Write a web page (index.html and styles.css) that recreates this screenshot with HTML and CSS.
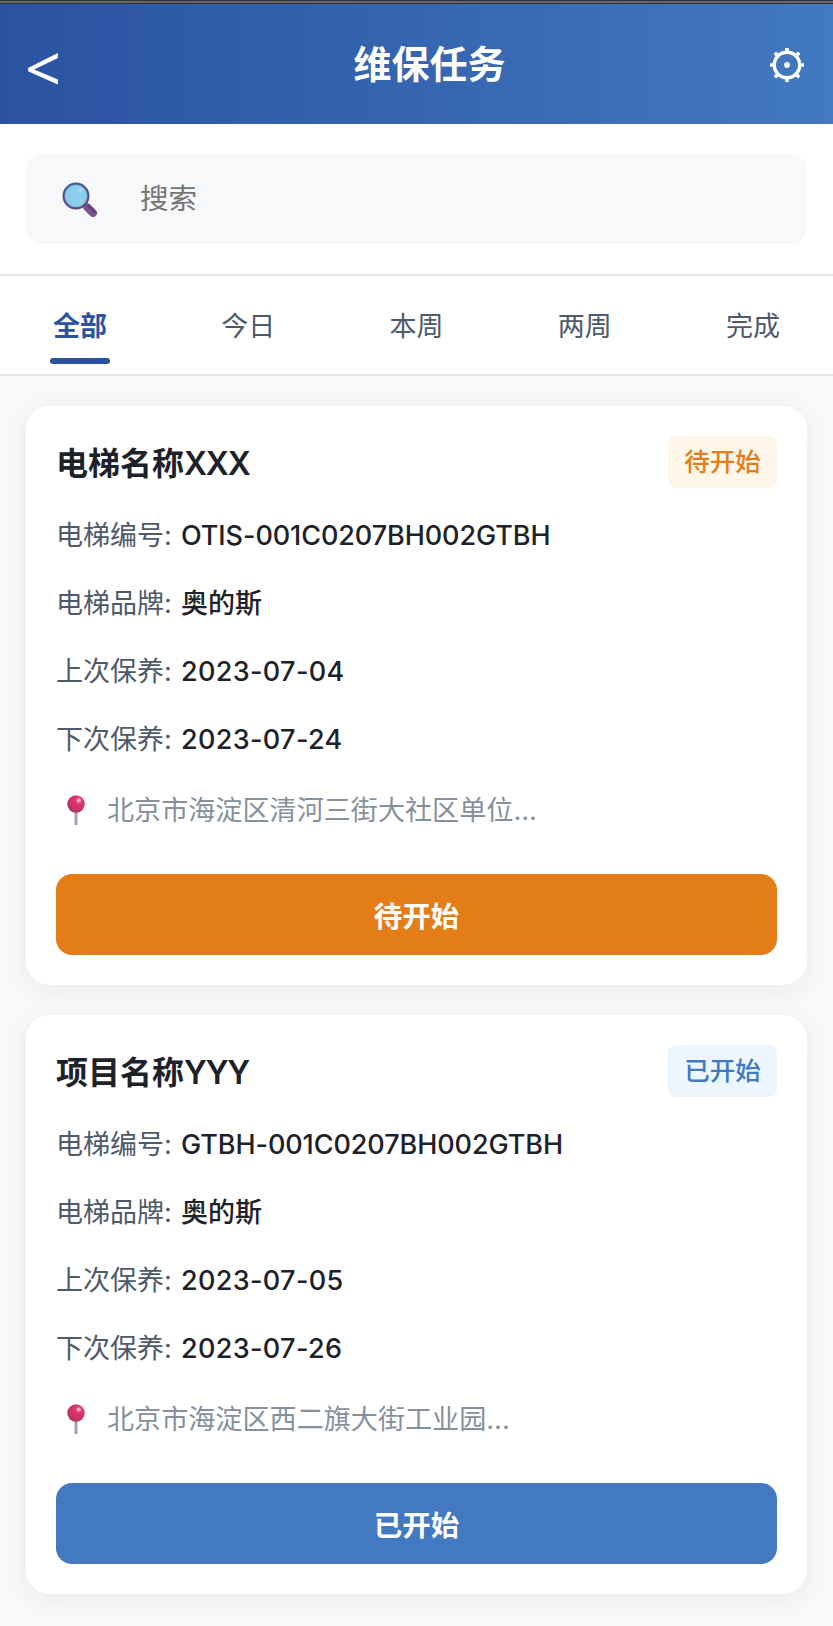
FILE: index.html
```html
<!DOCTYPE html>
<html lang="zh-CN">

<head>
    <meta charset="UTF-8">
    <meta name="viewport" content="width=device-width, initial-scale=1.0">
    <title>维保任务</title>
    <link rel="stylesheet" href="styles.css">
</head>

<body>
    <div class="topline"></div>
    <header class="header">
        <span class="back">&lt;</span>
        <h1>维保任务</h1>
        <svg class="gear" viewBox="-18 -18 36 36" width="36" height="36" fill="none" stroke="#fff">
            <circle r="12.7" stroke-width="3.4"/>
            <circle r="2.9" fill="#fff" stroke="none"/>
            <path stroke-width="3.6" d="M0-13V-17M0 13V17M-13 0H-17M13 0H17M-9.2-9.2L-12.2-12.2M9.2-9.2L12.2-12.2M-9.2 9.2L-12.2 12.2M9.2 9.2L12.2 12.2"/>
        </svg>
    </header>

    <div class="search">
        <div class="search-box">
            <svg class="search-icon" viewBox="0 0 36 36" width="36" height="36">
                <defs>
                    <linearGradient id="rim" x1="0" y1="0" x2="0" y2="1">
                        <stop offset="0" stop-color="#46578f"/>
                        <stop offset="1" stop-color="#69417d"/>
                    </linearGradient>
                </defs>
                <path d="M25.4 25.4L31 31" stroke="#7c528c" stroke-width="8" stroke-linecap="round"/>
                <path d="M26.5 24L32 29.5" stroke="#68417c" stroke-width="3" stroke-linecap="round"/>
                <circle cx="14" cy="14" r="12.4" fill="#8ccfeb" stroke="url(#rim)" stroke-width="2.2"/>
                <circle cx="14" cy="14" r="10.8" fill="none" stroke="#74b9e3" stroke-width="1"/>
                <circle cx="18.6" cy="8.2" r="2" fill="#bfd3f3"/>
            </svg>
            <input type="text" placeholder="搜索">
        </div>
    </div>

    <nav class="tabs">
        <a class="tab active">全部</a>
        <a class="tab">今日</a>
        <a class="tab">本周</a>
        <a class="tab">两周</a>
        <a class="tab">完成</a>
    </nav>

    <main class="list">
        <section class="card">
            <div class="card-head">
                <h2>电梯名称<span>XXX</span></h2>
                <span class="badge pending">待开始</span>
            </div>
            <div class="row"><span class="label">电梯编号:</span><span class="value code">OTIS-001C0207BH002GTBH</span></div>
            <div class="row"><span class="label">电梯品牌:</span><span class="value">奥的斯</span></div>
            <div class="row"><span class="label">上次保养:</span><span class="value date">2023-07-04</span></div>
            <div class="row"><span class="label">下次保养:</span><span class="value date">2023-07-24</span></div>
            <div class="address">
                <svg class="pin" viewBox="0 0 18 30" width="18" height="30">
                    <defs>
                        <radialGradient id="ball" cx="0.65" cy="0.3" r="0.75">
                            <stop offset="0" stop-color="#ee6b9b"/>
                            <stop offset="0.3" stop-color="#d93871"/>
                            <stop offset="0.7" stop-color="#cf2f68"/>
                            <stop offset="1" stop-color="#91405c"/>
                        </radialGradient>
                    </defs>
                    <rect x="7.5" y="16" width="3" height="14" fill="#a99bb4"/>
                    <circle cx="9" cy="9" r="8.7" fill="url(#ball)"/>
                    <circle cx="11.8" cy="5.4" r="2" fill="#f3a9c4"/>
                </svg>
                <span>北京市海淀区清河三街大社区单位...</span>
            </div>
            <button class="btn pending">待开始</button>
        </section>

        <section class="card">
            <div class="card-head">
                <h2>项目名称<span>YYY</span></h2>
                <span class="badge started">已开始</span>
            </div>
            <div class="row"><span class="label">电梯编号:</span><span class="value code">GTBH-001C0207BH002GTBH</span></div>
            <div class="row"><span class="label">电梯品牌:</span><span class="value">奥的斯</span></div>
            <div class="row"><span class="label">上次保养:</span><span class="value date">2023-07-05</span></div>
            <div class="row"><span class="label">下次保养:</span><span class="value date">2023-07-26</span></div>
            <div class="address">
                <svg class="pin" viewBox="0 0 18 30" width="18" height="30">
                    <rect x="7.5" y="16" width="3" height="14" fill="#a99bb4"/>
                    <circle cx="9" cy="9" r="8.7" fill="url(#ball)"/>
                    <circle cx="11.8" cy="5.4" r="2" fill="#f3a9c4"/>
                </svg>
                <span>北京市海淀区西二旗大街工业园...</span>
            </div>
            <button class="btn started">已开始</button>
        </section>
    </main>
</body>

</html>
```
FILE: styles.css
```css
* {
    box-sizing: border-box;
}

body {
    margin: 0;
    background: #f7f8fa;
    color: #1d2129;
    font-family: Inter, "Noto Sans CJK SC", sans-serif;
    font-size: 27px;
}

h1, h2 {
    margin: 0;
}

.topline {
    height: 4px;
    background: #666;
    border-top: 1px solid #333;
    border-bottom: 1px solid #333;
}

.header {
    display: flex;
    align-items: center;
    justify-content: space-between;
    height: 120px;
    padding: 0 28px 0 25px;
    background: linear-gradient(90deg, #2a52a0, #4279c0);
    color: #fff;
}

.header h1 {
    font-size: 38px;
    font-weight: 600;
    line-height: 60px;
}

.back {
    width: 65px;
    padding-top: 7px;
    font-family: "Noto Sans", sans-serif;
    font-size: 63px;
    line-height: 60px;
}

.gear {
    display: block;
    margin-top: 2px;
}

.search {
    padding: 30px 26px;
    background: #fff;
    border-bottom: 2px solid #e5e6eb;
}

.search-box {
    display: flex;
    align-items: center;
    gap: 42px;
    height: 90px;
    padding: 0 36px;
    background: #f7f8fa;
    border-radius: 16px;
}

.search-icon {
    margin-top: 2px;
}

.search-box input {
    flex: 1;
    padding: 0 0 2px;
    border: 0;
    background: none;
    font-family: inherit;
    font-size: 28.5px;
    outline: none;
}

.search-box input::placeholder {
    color: #757575;
}

.tabs {
    display: flex;
    justify-content: space-between;
    height: 100px;
    padding: 0 50px;
    background: #fff;
    border-bottom: 2px solid #e5e6eb;
}

.tab {
    position: relative;
    width: 60px;
    padding-top: 2px;
    line-height: 97px;
    text-align: center;
    color: #4e5969;
}

.tab.active {
    color: #2a52a0;
    font-weight: 600;
}

.tab.active::after {
    content: "";
    position: absolute;
    left: 0;
    bottom: 10px;
    width: 60px;
    height: 6px;
    border-radius: 3px;
    background: #2a52a0;
}

.list {
    display: flex;
    flex-direction: column;
    gap: 30px;
    padding: 30px 26px 32px;
}

.card {
    height: 579px;
    padding: 30px;
    background: #fff;
    border-radius: 24px;
    box-shadow: 0 4px 24px rgba(0, 0, 0, 0.06);
}

.card-head {
    display: flex;
    align-items: center;
    justify-content: space-between;
    height: 52px;
    margin-bottom: 14px;
}

.card-head h2 {
    padding-bottom: 3px;
    font-size: 32px;
    font-weight: 600;
}

.card-head h2 span {
    letter-spacing: -1.2px;
}

.badge {
    width: 109px;
    border-radius: 8px;
    font-size: 25.5px;
    font-weight: 500;
    line-height: 52px;
    text-align: center;
}

.badge.pending {
    background: #fdf6e9;
    color: #e37d18;
}

.badge.started {
    background: #ebf6ff;
    color: #4279c0;
}

.row {
    display: flex;
    gap: 9px;
    height: 68px;
    line-height: 68px;
}

.label {
    width: 116px;
    color: #4e5969;
    white-space: nowrap;
}

.value {
    font-weight: 500;
}

.value.code {
    letter-spacing: -0.08px;
}

.value.date {
    letter-spacing: 0.35px;
}

.address {
    display: flex;
    align-items: center;
    height: 72px;
    margin-bottom: 28px;
    padding-left: 11px;
    gap: 22px;
    color: #86909c;
    font-size: 27.1px;
}

.pin {
    margin-bottom: 1px;
}

.address span {
    padding-bottom: 3px;
}

.btn {
    display: block;
    width: 100%;
    height: 81px;
    padding: 0;
    border: 0;
    border-radius: 16px;
    color: #fff;
    font-family: inherit;
    font-size: 28.5px;
    font-weight: 600;
}

.btn.pending {
    background: #e37d18;
}

.btn.started {
    background: #4279c0;
}
```
